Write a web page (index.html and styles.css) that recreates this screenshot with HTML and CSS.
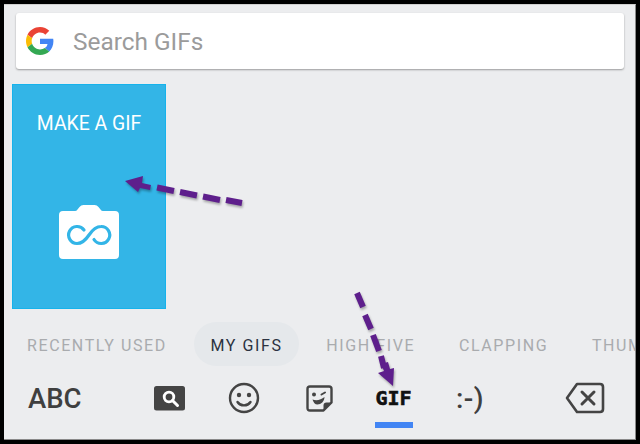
FILE: index.html
```html
<!DOCTYPE html>
<html lang="en">
<head>
    <title>GIF keyboard</title>
    <meta charset="utf-8">
    <link rel="stylesheet" href="styles.css">
</head>
<body>
    <div class="frame">
        <div class="search-bar">
            <svg class="google-logo" width="28" height="28" viewBox="0 0 48 48">
                <path fill="#EA4335" d="M24 9.5c3.9 0 6.9 1.6 9.1 3.6l6.8-6.8C35.8 2.5 30.4 0 24 0 14.6 0 6.5 5.4 2.6 13.2l7.9 6.1C12.4 13.7 17.7 9.5 24 9.5z"/>
                <path fill="#4285F4" d="M47 24.5c0-1.6-.1-3.1-.4-4.5H24v9h12.9c-.6 3-2.2 5.5-4.8 7.2l7.7 6C44.3 38 47 31.9 47 24.5z"/>
                <path fill="#FBBC05" d="M10.5 28.7c-.5-1.5-.8-3-.8-4.7s.3-3.2.8-4.7l-7.9-6.1C1 16.5 0 20.1 0 24s1 7.5 2.6 10.8l7.9-6.1z"/>
                <path fill="#34A853" d="M24 48c6.5 0 11.9-2.1 15.9-5.8l-7.7-6c-2.2 1.4-4.9 2.3-8.2 2.3-6.3 0-11.6-4.2-13.5-9.8l-7.9 6.1C6.5 42.6 14.6 48 24 48z"/>
            </svg>
            <span class="search-text">Search GIFs</span>
        </div>

        <div class="gif-grid">
            <div class="make-card">
                <div class="make-title">MAKE A GIF</div>
                <svg class="make-icon" width="60" height="54" viewBox="0 0 60 54">
                    <path fill="#fff" d="M4 6h12q1.5 0 2.5-1.5l2-2.500q1.5-2 4-2h11q2.5 0 4 2l2 2.500q1 1.500 2.500 1.500h12q4 0 4 4v40q0 4-4 4H4q-4 0-4-4V10q0-4 4-4z"/>
                    <path fill="none" stroke="#33b5e7" stroke-width="3.2" stroke-linecap="round" d="M25 25A8.5 8.5 0 1 0 18 38.5C24 38.5 28 33 30 30C32 27 36 21.5 42 21.5A8.5 8.5 0 1 1 35 34.5"/>
                </svg>
            </div>
        </div>

        <div class="tabs">
            <span class="tab">RECENTLY USED</span>
            <span class="tab tab-active">MY GIFS</span>
            <span class="tab">HIGH FIVE</span>
            <span class="tab">CLAPPING</span>
            <span class="tab">THUMBS UP</span>
        </div>

        <div class="toolbar">
            <span class="abc">ABC</span>
            <div class="tool">
                <svg width="32" height="25" viewBox="0 0 32 25">
                    <rect width="31" height="24.5" rx="2.5" fill="#444"/>
                    <circle cx="15" cy="11" r="4.8" fill="none" stroke="#fff" stroke-width="2.8"/>
                    <path d="M18.5 14.5l5 5" stroke="#fff" stroke-width="3" stroke-linecap="round"/>
                </svg>
            </div>
            <div class="tool">
                <svg class="smile-icon" width="32" height="32" viewBox="0 0 32 32">
                    <circle cx="16" cy="16" r="14" fill="none" stroke="#444" stroke-width="2.4"/>
                    <circle cx="11" cy="13" r="2.2" fill="#444"/>
                    <circle cx="21" cy="13" r="2.2" fill="#444"/>
                    <path d="M9.5 20c3 4.5 10 4.5 13 0" fill="none" stroke="#444" stroke-width="2.4" stroke-linecap="round"/>
                </svg>
            </div>
            <div class="tool">
                <svg width="27" height="27" viewBox="0 0 27 27">
                    <path d="M4 1.5h19q2.5 0 2.5 2.5v13.5l-8 8H4q-2.5 0-2.5-2.5V4q0-2.5 2.500-2.500z" fill="none" stroke="#444" stroke-width="2.4" stroke-linejoin="round"/>
                    <path d="M17.5 25.5v-5q0-3 3-3h5z" fill="#444"/>
                    <circle cx="8" cy="9.5" r="2" fill="#444"/>
                    <path d="M15.5 9.5l3.5-2" stroke="#444" stroke-width="2" stroke-linecap="round"/>
                    <path d="M6.5 14.5c4 1.5 8.5 .5 12-2.500 0 4.500-3.500 7.500-7 7.500-2.500 0-4-2-5-5z" fill="#444"/>
                </svg>
            </div>
            <div class="tool">
                <span class="gif-label">GIF</span>
                <span class="tool-marker"></span>
            </div>
            <div class="tool">
                <span class="emoticon">:-)</span>
            </div>
            <div class="tool tool-back">
                <svg width="40" height="32" viewBox="0 0 40 32">
                    <path d="M12 2h23q3 0 3 3v22q0 3-3 3H12L2 16z" fill="none" stroke="#444" stroke-width="2.6" stroke-linejoin="round"/>
                    <path d="M17 10l12 12M29 10L17 22" stroke="#444" stroke-width="3" stroke-linecap="round"/>
                </svg>
            </div>
        </div>

        <!-- annotation arrows drawn over the keyboard -->
        <svg class="arrows" width="640" height="444" viewBox="0 0 640 444">
            <g class="arrow-group">
                <path d="M125 181L143 176L142 183L151 185L150 190L140 188L138 192z"/>
                <path class="dashes" d="M157 187.5l17 3.5M180 192l17 3.5M203 196.5l17 3.5M226 200l16 3"/>
                <path class="dashes" d="M357 293l6 14M365 315l6 14M373 335l6 16M381 356l3 12"/>
                <path d="M393 386L378 373L384 371L381 364L388 362L390 369L394 368z"/>
            </g>
        </svg>
    </div>
</body>
</html>
```

FILE: styles.css
```css
* {
    box-sizing: border-box;
}

body {
    margin: 0;
    background: #000;
    font-family: 'Roboto', Arial, sans-serif;
}

.frame {
    position: relative;
    width: 632px;
    height: 436px;
    margin-top: 4px;
    margin-left: 4px;
    border-top: 1px solid #d0d0d0;
    border-right: 1px solid #8a8a8a;
    border-bottom: 1px solid #8a8a8a;
    background: #ecedef;
    overflow: hidden;
    display: flex;
    flex-direction: column;
}

.search-bar {
    display: flex;
    align-items: center;
    flex: none;
    height: 56px;
    margin: 8px 11px 0 12px;
    padding-left: 10px;
    background: #fff;
    border-radius: 3px;
    box-shadow: 0 1px 2px rgba(0,0,0,0.35);
}

.google-logo {
    flex: none;
}

.search-text {
    margin-left: 19px;
    padding-top: 1px;
    font-size: 24.4px;
    color: #9b9b9b;
}

.gif-grid {
    display: flex;
    flex: none;
    height: 225px;
    margin: 15px 0 0 8px;
}

.make-card {
    display: flex;
    flex-direction: column;
    align-items: center;
    width: 154px;
    background: #33b5e7;
    border: 1px solid #16b3ec;
}

.make-title {
    margin-top: 27px;
    font-size: 19.4px;
    color: #fff;
}

.make-icon {
    margin-top: 70px;
}

.tabs {
    display: flex;
    flex: none;
    gap: 11.7px;
    align-items: center;
    height: 44px;
    margin-top: 13px;
    padding-left: 7px;
    white-space: nowrap;
}

.tab {
    display: flex;
    align-items: center;
    height: 44px;
    padding: 2px 16px 0;
    border-radius: 22px;
    font-size: 16px;
    letter-spacing: 1.6px;
    color: #a9abae;
}

.tab-active {
    background: #e5e8eb;
    color: #2b3240;
}

.toolbar {
    display: grid;
    grid-template-columns: 128px repeat(5, 75px) 1fr;
    align-items: center;
    flex: none;
    height: 60px;
    margin-top: 2px;
}

.abc {
    padding-left: 24px;
    font-size: 27.5px;
    font-weight: 500;
    color: #3f3f3f;
}

.tool {
    position: relative;
    display: flex;
    justify-content: center;
    align-items: center;
}

.tool-back {
    padding-left: 28px;
}

.smile-icon {
    margin-right: 1px;
}

.gif-label {
    margin-right: 2px;
    font-family: 'DejaVu Sans Mono', monospace;
    font-weight: bold;
    font-size: 20px;
    line-height: 24px;
    color: #111;
    -webkit-text-stroke: 0.6px #111;
}

.tool-marker {
    position: absolute;
    left: 18px;
    top: 36px;
    width: 38px;
    height: 6px;
    background: #4285f4;
}

.emoticon {
    padding-left: 1px;
    font-size: 28px;
    font-weight: 500;
    letter-spacing: 0.5px;
    color: #3f3f3f;
}

.arrows {
    position: absolute;
    left: -4px;
    top: -5px;
    pointer-events: none;
}

.arrow-group {
    fill: #5e1f8c;
    filter: drop-shadow(1px 2px 1px rgba(0,0,0,0.3));
}

.dashes {
    fill: none;
    stroke: #5e1f8c;
    stroke-width: 6;
}
```
